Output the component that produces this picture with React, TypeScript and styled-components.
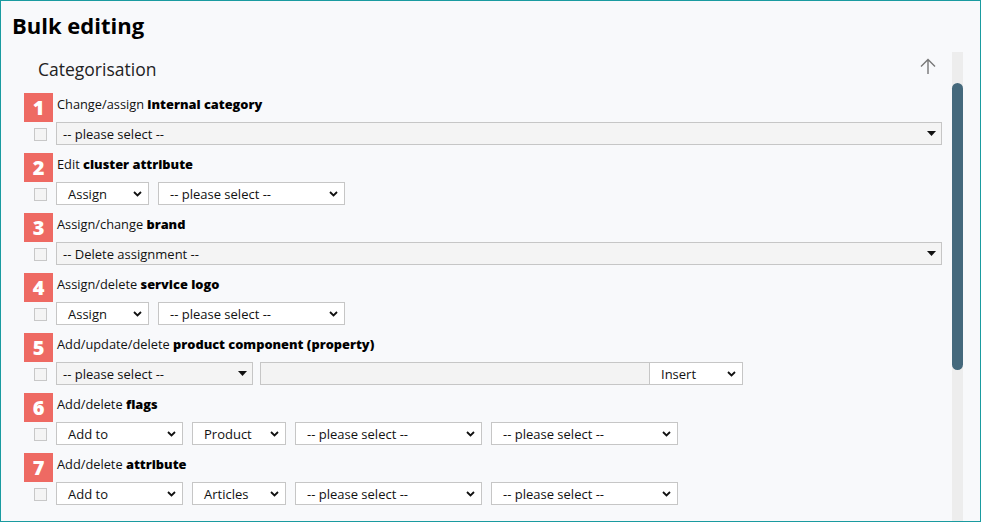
import styled, { createGlobalStyle } from 'styled-components';

type Control =
  | { kind: 'select'; text: string; width?: number; filled?: boolean }
  | { kind: 'input'; width: number; suffix: string; suffixWidth: number };

type Item = {
  lead: string;
  strong: string;
  gap: number;
  controls: Control[];
};

const ITEMS: Item[] = [
  {
    lead: 'Change/assign ',
    strong: 'internal category',
    gap: 9,
    controls: [{ kind: 'select', text: '-- please select --', filled: true }],
  },
  {
    lead: 'Edit ',
    strong: 'cluster attribute',
    gap: 9,
    controls: [
      { kind: 'select', text: 'Assign', width: 93 },
      { kind: 'select', text: '-- please select --', width: 187 },
    ],
  },
  {
    lead: 'Assign/change ',
    strong: 'brand',
    gap: 9,
    controls: [{ kind: 'select', text: '-- Delete assignment --', filled: true }],
  },
  {
    lead: 'Assign/delete ',
    strong: 'service logo',
    gap: 9,
    controls: [
      { kind: 'select', text: 'Assign', width: 93 },
      { kind: 'select', text: '-- please select --', width: 187 },
    ],
  },
  {
    lead: 'Add/update/delete ',
    strong: 'product component (property)',
    gap: 7,
    controls: [
      { kind: 'select', text: '-- please select --', width: 197, filled: true },
      { kind: 'input', width: 389, suffix: 'Insert', suffixWidth: 94 },
    ],
  },
  {
    lead: 'Add/delete ',
    strong: 'flags',
    gap: 9,
    controls: [
      { kind: 'select', text: 'Add to', width: 127 },
      { kind: 'select', text: 'Product', width: 94 },
      { kind: 'select', text: '-- please select --', width: 187 },
      { kind: 'select', text: '-- please select --', width: 187 },
    ],
  },
  {
    lead: 'Add/delete ',
    strong: 'attribute',
    gap: 9,
    controls: [
      { kind: 'select', text: 'Add to', width: 127 },
      { kind: 'select', text: 'Articles', width: 94 },
      { kind: 'select', text: '-- please select --', width: 187 },
      { kind: 'select', text: '-- please select --', width: 187 },
    ],
  },
];

const Chevron = () => (
  <svg width="9" height="6" viewBox="0 0 9 6">
    <path d="M1 1 L4.5 4.5 L8 1" fill="none" stroke="#111" strokeWidth="1.8" />
  </svg>
);

const Caret = () => (
  <svg width="9" height="5" viewBox="0 0 9 5">
    <path d="M0 0 H9 L4.5 5 Z" fill="#111" />
  </svg>
);

const ArrowUp = () => (
  <svg width="16" height="16" viewBox="0 0 16 16">
    <path d="M8 1.5 V16 M1 8.5 L8 1.5 L15 8.5" fill="none" stroke="#777" strokeWidth="1.4" />
  </svg>
);

const renderControl = (c: Control, i: number) => {
  if (c.kind === 'input')
    return (
      <InputGroup key={i}>
        <TextInput $width={c.width} />
        <Select $width={c.suffixWidth}>
          <span>{c.suffix}</span>
          <Chevron />
        </Select>
      </InputGroup>
    );
  return (
    <Select key={i} $width={c.width} $filled={c.filled}>
      <span>{c.text}</span>
      {c.filled ? <Caret /> : <Chevron />}
    </Select>
  );
};

const App = () => {
  return (
    <Window>
      <GlobalStyle />
      <Title>Bulk editing</Title>
      <Body>
        <Content>
          <SectionHead>
            <SectionTitle>Categorisation</SectionTitle>
            <ArrowUp />
          </SectionHead>
          {ITEMS.map((item, idx) => (
            <Entry key={idx}>
              <EntryHead>
                <Badge>{idx + 1}</Badge>
                <Label>
                  {item.lead}
                  <b>{item.strong}</b>
                </Label>
              </EntryHead>
              <Controls>
                <Check />
                <Fields $gap={item.gap}>{item.controls.map(renderControl)}</Fields>
              </Controls>
            </Entry>
          ))}
        </Content>
        <Track>
          <Thumb />
        </Track>
      </Body>
    </Window>
  );
};

export default App;

const GlobalStyle = createGlobalStyle`
  body {
    margin: 0;
    background: #f8f9fb;
    font-family: 'Open Sans', 'Noto Sans', sans-serif;
  }
`;

const Window = styled.div`
  box-sizing: border-box;
  width: 981px;
  height: 522px;
  border: 1px solid #1a9ba0;
  background: #f8f9fb;
  display: flex;
  flex-direction: column;
  overflow: hidden;
  color: #111;
`;

const Title = styled.h1`
  margin: 0;
  padding: 9px 0 12px 11px;
  font-size: 22px;
  line-height: 30px;
  font-weight: 700;
  color: #000;
`;

const Body = styled.div`
  flex: 1;
  min-height: 0;
  display: flex;
  margin-left: 23px;
  margin-right: 17px;
`;

const Content = styled.div`
  flex: 1;
  padding-right: 10px;
  overflow: hidden;
`;

const SectionHead = styled.div`
  height: 41px;
  box-sizing: border-box;
  padding: 5px 6px 0 14px;
  display: flex;
  justify-content: space-between;
  align-items: flex-start;

  svg {
    margin-top: 1px;
  }
`;

const SectionTitle = styled.h2`
  margin: 0;
  font-size: 17.5px;
  line-height: 24px;
  font-weight: 400;
  color: #222;
`;

const Entry = styled.div`
  display: flex;
  flex-direction: column;
  margin-bottom: 7px;
`;

const EntryHead = styled.div`
  display: flex;
  align-items: flex-start;
  height: 29px;
`;

const Badge = styled.div`
  width: 29px;
  height: 29px;
  background: #ee6a63;
  color: #fff;
  font-size: 20px;
  font-weight: 800;
  line-height: 29px;
  text-align: center;
`;

const Label = styled.div`
  margin-left: 4px;
  padding-top: 2px;
  font-size: 12.8px;
  line-height: 18px;
  color: #111;

  b {
    font-weight: 800;
    color: #000;
  }
`;

const Controls = styled.div`
  display: flex;
  align-items: flex-start;
  height: 24px;
`;

const Fields = styled.div<{ $gap: number }>`
  flex: 1;
  display: flex;
  gap: ${({ $gap }) => $gap}px;
`;

const Check = styled.div`
  box-sizing: border-box;
  width: 13px;
  height: 13px;
  margin: 6px 9px 0 10px;
  border: 1px solid #c8c8c8;
  background: #f4f4f4;
`;

const Select = styled.div<{ $width?: number; $filled?: boolean }>`
  box-sizing: border-box;
  height: 23px;
  display: flex;
  align-items: center;
  justify-content: space-between;
  flex: ${({ $width }) => ($width ? `0 0 ${$width}px` : '1')};
  padding: ${({ $filled }) => ($filled ? '0 5px 0 6px' : '0 6px 0 11px')};
  border: 1px solid #c6c6c6;
  background: ${({ $filled }) => ($filled ? '#f4f4f4' : '#fff')};
  font-size: 13px;
  color: #111;
  white-space: nowrap;
`;

const InputGroup = styled.div`
  display: flex;
`;

const TextInput = styled.div<{ $width: number }>`
  box-sizing: border-box;
  flex: 0 0 ${({ $width }) => $width}px;
  height: 23px;
  border: 1px solid #c6c6c6;
  border-right: none;
  background: #f3f3f3;
`;

const Track = styled.div`
  width: 11px;
  background: #ededed;
  display: flex;
  flex-direction: column;
`;

const Thumb = styled.div`
  margin-top: 31px;
  height: 287px;
  border-radius: 6px;
  background: #45697c;
`;
